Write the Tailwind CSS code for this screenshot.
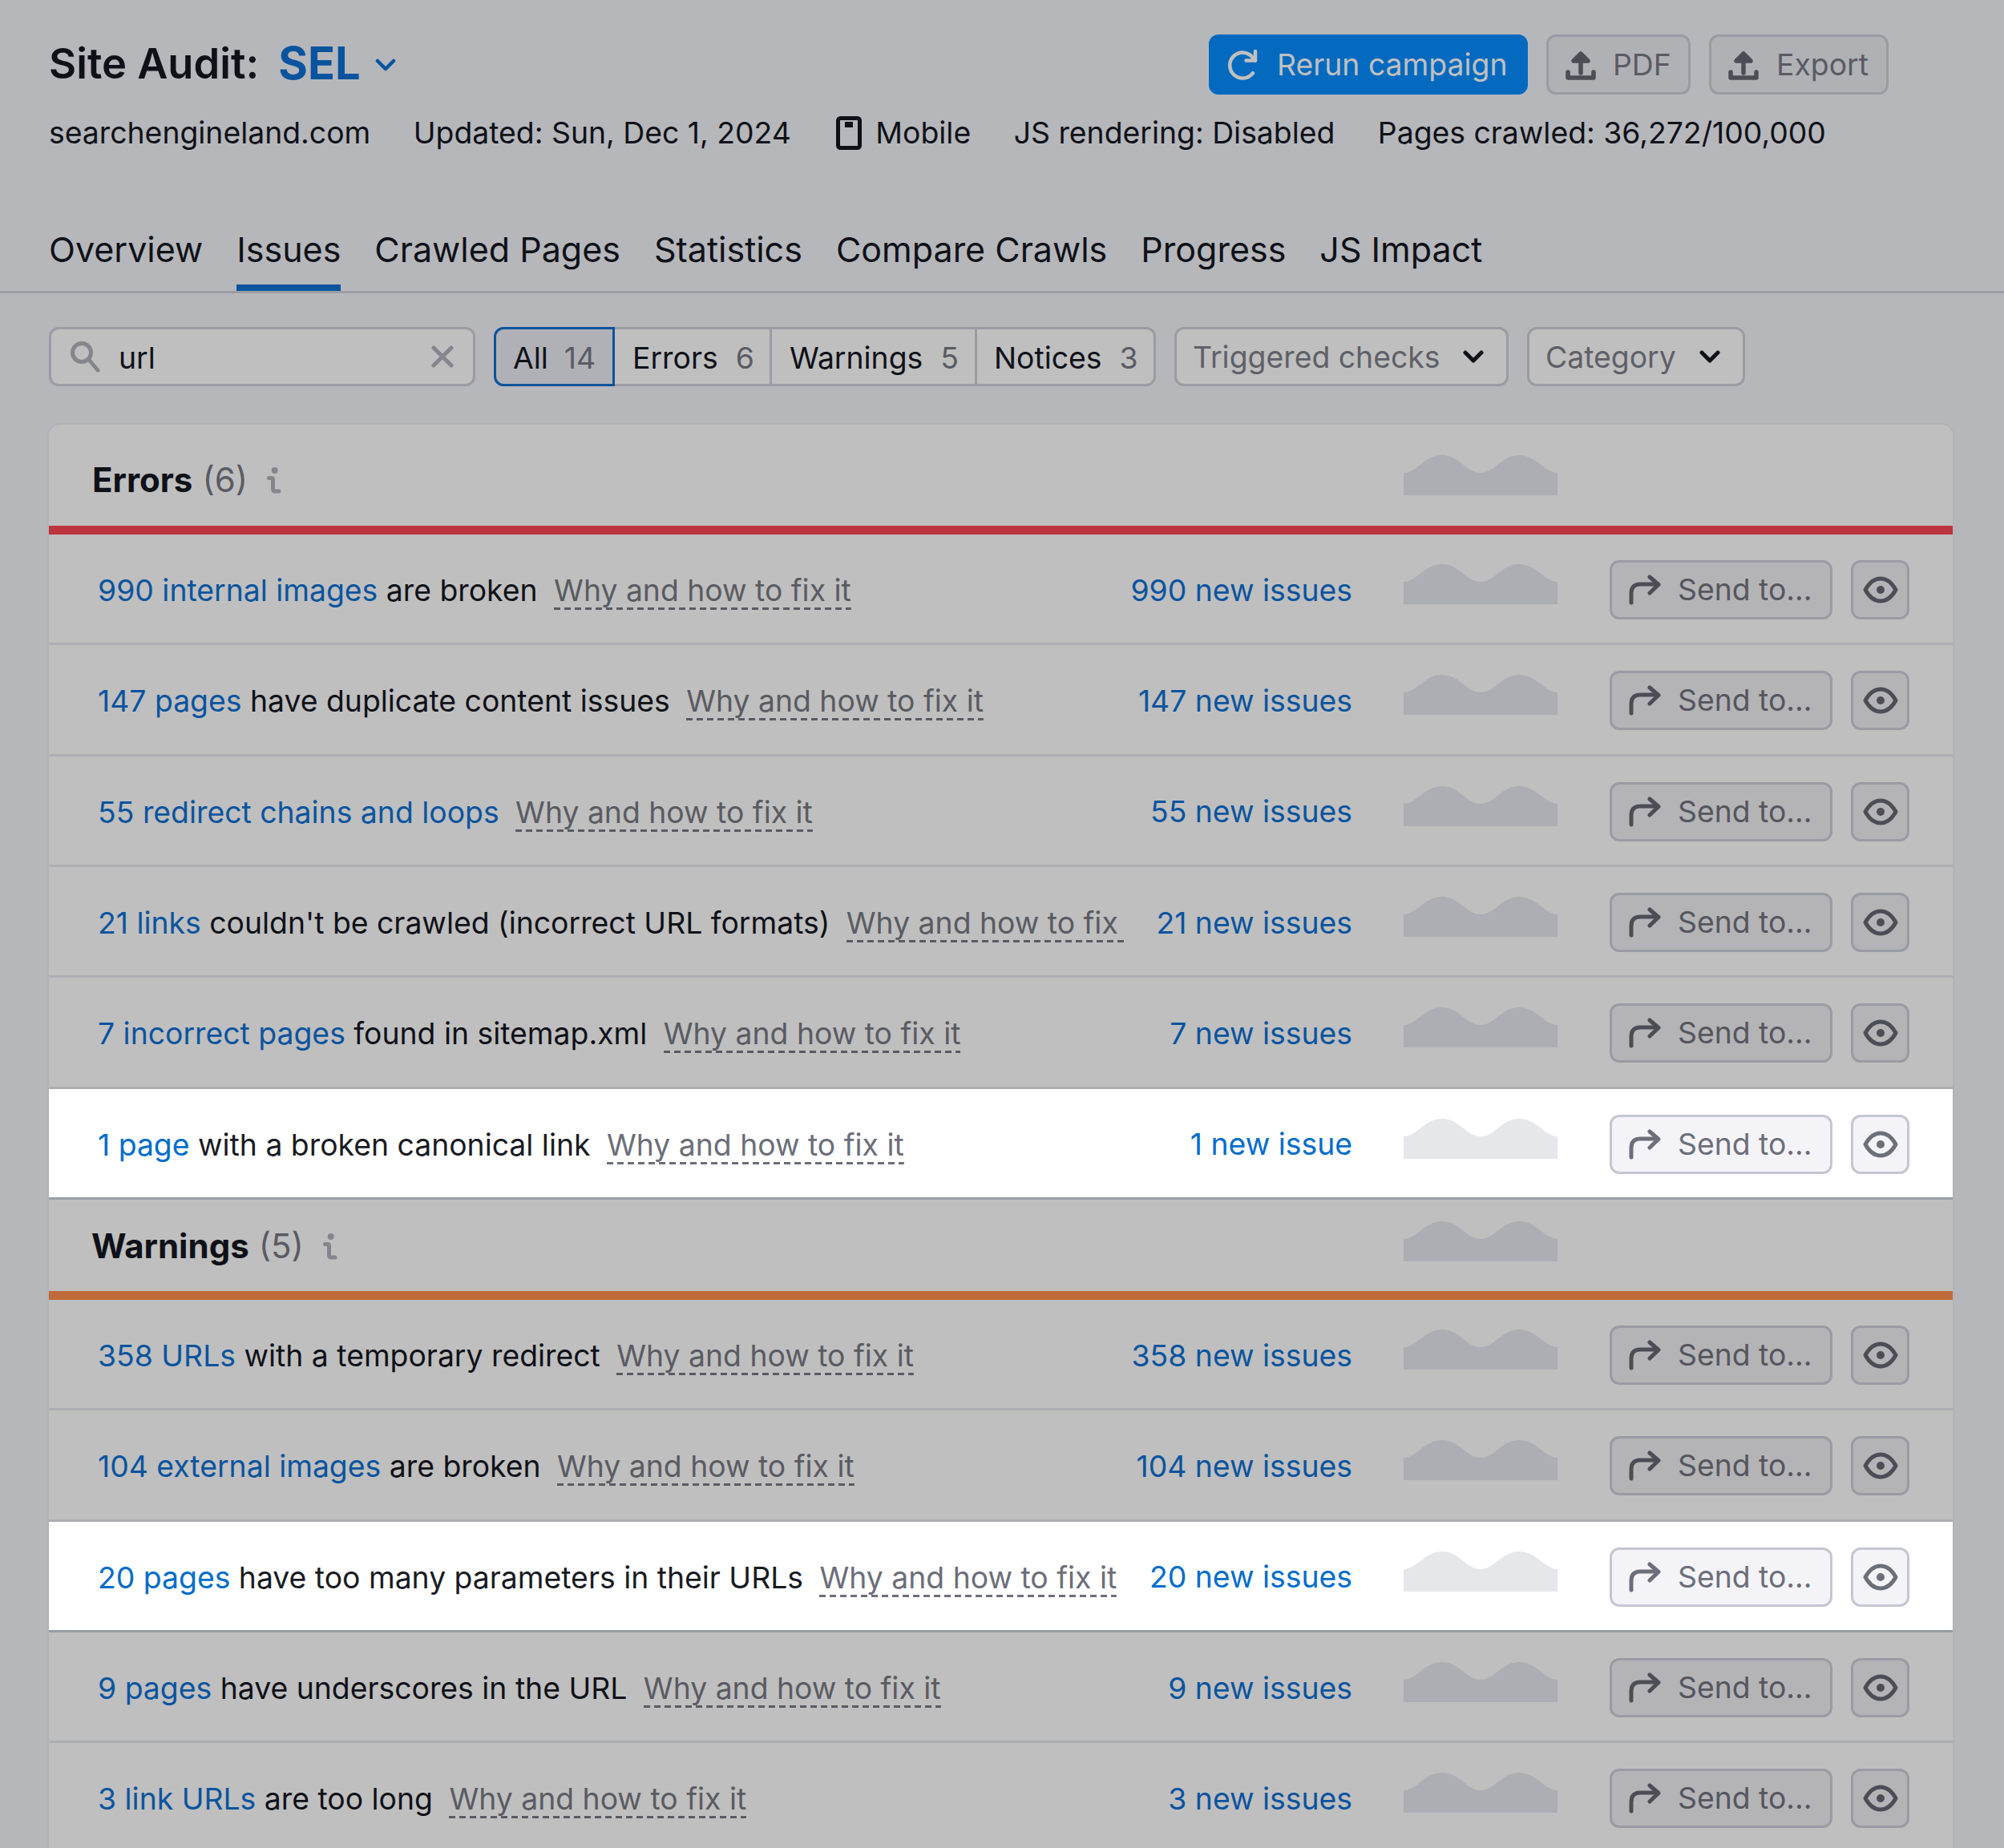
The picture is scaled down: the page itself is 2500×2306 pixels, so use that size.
<!DOCTYPE html>
<html lang="en">
<head>
<meta charset="utf-8">
<title>Site Audit</title>
<script src="https://cdn.jsdelivr.net/npm/@tailwindcss/browser@4"></script>
</head>
<body class="bg-[#b6b7bb] font-['Inter',sans-serif] text-[#0f1118] text-[37.33px] leading-[44px] overflow-hidden">
<div class="w-[2500px] h-[2306px] overflow-hidden">

<header class="px-[61px] h-[366px] border-b-[3px] border-[#9c9da4] flex flex-col">
  <div class="flex items-center h-[75px] mt-[43px]">
    <h1 class="mb-[3px] text-[52.500px] leading-[56px] font-semibold">Site Audit:</h1>
    <span class="mb-[3px] ml-[24px] text-[56px] leading-[56px] font-bold text-[#0a549e]">SEL</span>
    <svg class="ml-[18px] mt-[1px]" width="26" height="16" viewBox="0 0 26 16" fill="none" stroke="#0a549e" stroke-width="4.500" stroke-linecap="round" stroke-linejoin="round"><path d="M3 3l10 10L23 3"/></svg>
    <div class="ml-auto mr-[83px] flex gap-[23px]">
      <button class="h-[75px] w-[398px] rounded-[12px] bg-[#046abf] text-[#c0c0c0] flex items-center pl-[24px]">
        <svg width="40" height="40" viewBox="0 0 40 40" fill="none" stroke="#c0c0c0" stroke-width="4.500" stroke-linecap="round" stroke-linejoin="round"><path d="M31 30.200A16 16 0 1 1 31 11L34 14.500"/><path d="M34 3V14.500H22.500"/></svg>
        <span class="ml-[21px]">Rerun campaign</span>
      </button>
      <button class="h-[75px] w-[180px] rounded-[12px] bg-[#b0b1b5] border-[3px] border-[#9b9ca3] text-[#5a5b63] flex items-center pl-[20px]">
        <svg width="40" height="38" viewBox="0 0 40 38" fill="none" stroke="#4c4d55" stroke-width="5.500" stroke-linecap="round" stroke-linejoin="round"><path d="M20 5L11 14H29Z" fill="#4c4d55"/><path d="M20 10V29"/><path d="M4 28V35H36V28"/></svg>
        <span class="ml-[20px]">PDF</span>
      </button>
      <button class="h-[75px] w-[224px] rounded-[12px] bg-[#b0b1b5] border-[3px] border-[#9b9ca3] text-[#5a5b63] flex items-center pl-[20px]">
        <svg width="40" height="38" viewBox="0 0 40 38" fill="none" stroke="#4c4d55" stroke-width="5.500" stroke-linecap="round" stroke-linejoin="round"><path d="M20 5L11 14H29Z" fill="#4c4d55"/><path d="M20 10V29"/><path d="M4 28V35H36V28"/></svg>
        <span class="ml-[21px]">Export</span>
      </button>
    </div>
  </div>
  <div class="flex items-center h-[44px] mt-[26px] gap-[53.500px]">
    <span>searchengineland.com</span>
    <span>Updated: Sun, Dec 1, 2024</span>
    <span class="flex items-center">
      <svg class="ml-[3px]" width="32" height="42" viewBox="0 0 32 42" fill="none"><rect x="2.500" y="2.500" width="27" height="37" rx="3" stroke="#0f1118" stroke-width="5"/><rect x="11" y="7" width="10" height="7" fill="#0f1118"/></svg>
      <span class="ml-[17px]">Mobile</span>
    </span>
    <span>JS rendering: Disabled</span>
    <span>Pages crawled: 36,272/100,000</span>
  </div>
  <nav class="flex gap-[42px] mt-auto text-[43px] leading-[52px]">
    <a class="h-[88px] pt-[10px]">Overview</a>
    <a class="h-[88px] pt-[10px] border-b-[8px] border-[#0a549e] -mb-[2px]">Issues</a>
    <a class="h-[88px] pt-[10px]">Crawled Pages</a>
    <a class="h-[88px] pt-[10px]">Statistics</a>
    <a class="h-[88px] pt-[10px]">Compare Crawls</a>
    <a class="h-[88px] pt-[10px]">Progress</a>
    <a class="h-[88px] pt-[10px]">JS Impact</a>
  </nav>
</header>

<div class="flex items-center px-[61px] mt-[42px] h-[74px]">
  <div class="w-[532px] h-[74px] rounded-[12px] border-[3px] border-[#9b9ca3] bg-[#bfbfbf] flex items-center pl-[23px] pr-[24px]">
    <svg width="38" height="40" viewBox="0 0 38 40" fill="none" stroke="#85868d" stroke-width="5" stroke-linecap="round"><circle cx="15" cy="15" r="11.500"/><path d="M24 24l11 13"/></svg>
    <span class="ml-[23px] pt-[4px]">url</span>
    <svg class="ml-auto" width="28" height="28" viewBox="0 0 28 28" fill="none" stroke="#85868d" stroke-width="5" stroke-linecap="round"><path d="M3 3l22 22M25 3L3 25"/></svg>
  </div>
  <div class="ml-[23px] flex h-[74px]">
    <div class="w-[151px] pt-[4px] rounded-l-[12px] border-[3px] border-[#0a549e] bg-[#b0b1b7] flex items-center pl-[21px]"><span>All</span><span class="ml-[20px] text-[#5a5b63]">14</span></div>
    <div class="w-[196px] pt-[4px] border-y-[3px] border-r-[3px] border-[#9b9ca3] bg-[#bfbfbf] flex items-center pl-[22px]"><span>Errors</span><span class="ml-[22px] text-[#5a5b63]">6</span></div>
    <div class="w-[256px] pt-[4px] border-y-[3px] border-r-[3px] border-[#9b9ca3] bg-[#bfbfbf] flex items-center pl-[22px]"><span>Warnings</span><span class="ml-[22px] text-[#5a5b63]">5</span></div>
    <div class="w-[223px] pt-[4px] rounded-r-[12px] border-y-[3px] border-r-[3px] border-[#9b9ca3] bg-[#bfbfbf] flex items-center pl-[21px]"><span>Notices</span><span class="ml-[22px] text-[#5a5b63]">3</span></div>
  </div>
  <div class="ml-[23px] w-[417px] h-[74px] rounded-[12px] border-[3px] border-[#9b9ca3] bg-[#bfbfbf] flex items-center pl-[20px] text-[#5f6068]">
    <span class="pt-[1px]">Triggered checks</span>
    <svg class="ml-auto mr-[28px]" width="26" height="18" viewBox="0 0 26 18" fill="none" stroke="#0f1118" stroke-width="5" stroke-linecap="round" stroke-linejoin="round"><path d="M3 4l10 10L23 4"/></svg>
  </div>
  <div class="ml-[23px] w-[272px] h-[74px] rounded-[12px] border-[3px] border-[#9b9ca3] bg-[#bfbfbf] flex items-center pl-[20px] text-[#5f6068]">
    <span class="pt-[1px]">Category</span>
    <svg class="ml-auto mr-[28px]" width="26" height="18" viewBox="0 0 26 18" fill="none" stroke="#0f1118" stroke-width="5" stroke-linecap="round" stroke-linejoin="round"><path d="M3 4l10 10L23 4"/></svg>
  </div>
</div>

<main class="ml-[59px] mt-[46px] w-[2379px] bg-[#bfbfbf] rounded-t-[16px] border-x-2 border-t-2 border-[#b2b3b7]">

  <section class="h-[126px] flex items-center">
    <div class="ml-[54px] mt-[12px] flex items-center">
      <h2 class="text-[42px] leading-[50px] font-bold">Errors</h2>
      <span class="ml-[12px] text-[42px] leading-[50px] text-[#5a5b63]">(6)</span>
      <svg class="ml-[24px]" width="18" height="36" viewBox="0 0 18 36" fill="none" stroke="#85868d" stroke-width="5" stroke-linecap="round" stroke-linejoin="round"><circle cx="9.700" cy="6" r="4" fill="#85868d" stroke="none"/><path d="M2.500 15.500H6Q7.500 15.500 7.500 17V29Q7.500 32 10 32H15"/></svg>
    </div>
    <svg class="ml-auto mr-[493px] shrink-0" width="192" height="50" viewBox="0 0 192 50" fill="#adaeb4"><path d="M0 22C16 22 26 0 48 0S78 22 96 22 122 0 144 0 176 22 192 22V50H0z"/></svg>
  </section>
  <div class="h-[11px] bg-[#bd3540]"></div>

  <div class="h-[138.33px] pt-[3px] flex items-center border-b-[3px] border-[#adaeb3]">
    <div class="ml-[61px] flex-1 min-w-0 pt-[10px] pb-[6px] whitespace-nowrap overflow-hidden"><a class="text-[#0a549e]">990 internal images</a> are broken <span class="inline-block leading-[42px] ml-[10px] pb-[3px] text-[#5a5b62] bg-[repeating-linear-gradient(90deg,#5a5b62_0,#5a5b62_8px,transparent_8px,transparent_13px)] bg-bottom bg-no-repeat bg-[length:100%_3px]">Why and how to fix it</span></div>
    <span class="ml-[20px] pt-[1px] text-[#0a549e] whitespace-nowrap">990 new issues</span>
    <svg class="ml-[64px] mb-[14px] shrink-0" width="192" height="50" viewBox="0 0 192 50" fill="#adaeb4"><path d="M0 22C16 22 26 0 48 0S78 22 96 22 122 0 144 0 176 22 192 22V50H0z"/></svg>
    <button class="ml-[65px] w-[278px] h-[74px] rounded-[12px] bg-[#b4b4b7] border-[3px] border-[#9a9ba3] text-[#55565e] flex items-center pl-[21px] shrink-0"><svg width="40" height="38" viewBox="0 0 40 38" fill="none" stroke="#4c4d55" stroke-width="5" stroke-linecap="round" stroke-linejoin="round"><path d="M3 35V23C3 15 8 12 14 12H36"/><path d="M26 3l11 9.500-11 10.500"/></svg><span class="ml-[21px]">Send to...</span></button>
    <button class="ml-[23px] mr-[54px] w-[73px] h-[74px] rounded-[12px] bg-[#b4b4b7] border-[3px] border-[#9a9ba3] flex items-center justify-center shrink-0"><svg width="44" height="34" viewBox="0 0 44 34" fill="none" stroke="#4c4d55" stroke-width="5"><path d="M3 17C8 8 14 3 22 3s14 5 19 14c-5 9-11 14-19 14S8 26 3 17z" stroke-linejoin="round"/><circle cx="22" cy="17" r="5" fill="#4c4d55" stroke="none"/></svg></button>
  </div>

  <div class="h-[138.33px] pt-[3px] flex items-center border-b-[3px] border-[#adaeb3]">
    <div class="ml-[61px] flex-1 min-w-0 pt-[10px] pb-[6px] whitespace-nowrap overflow-hidden"><a class="text-[#0a549e]">147 pages</a> have duplicate content issues <span class="inline-block leading-[42px] ml-[10px] pb-[3px] text-[#5a5b62] bg-[repeating-linear-gradient(90deg,#5a5b62_0,#5a5b62_8px,transparent_8px,transparent_13px)] bg-bottom bg-no-repeat bg-[length:100%_3px]">Why and how to fix it</span></div>
    <span class="ml-[20px] pt-[1px] text-[#0a549e] whitespace-nowrap">147 new issues</span>
    <svg class="ml-[64px] mb-[14px] shrink-0" width="192" height="50" viewBox="0 0 192 50" fill="#adaeb4"><path d="M0 22C16 22 26 0 48 0S78 22 96 22 122 0 144 0 176 22 192 22V50H0z"/></svg>
    <button class="ml-[65px] w-[278px] h-[74px] rounded-[12px] bg-[#b4b4b7] border-[3px] border-[#9a9ba3] text-[#55565e] flex items-center pl-[21px] shrink-0"><svg width="40" height="38" viewBox="0 0 40 38" fill="none" stroke="#4c4d55" stroke-width="5" stroke-linecap="round" stroke-linejoin="round"><path d="M3 35V23C3 15 8 12 14 12H36"/><path d="M26 3l11 9.500-11 10.500"/></svg><span class="ml-[21px]">Send to...</span></button>
    <button class="ml-[23px] mr-[54px] w-[73px] h-[74px] rounded-[12px] bg-[#b4b4b7] border-[3px] border-[#9a9ba3] flex items-center justify-center shrink-0"><svg width="44" height="34" viewBox="0 0 44 34" fill="none" stroke="#4c4d55" stroke-width="5"><path d="M3 17C8 8 14 3 22 3s14 5 19 14c-5 9-11 14-19 14S8 26 3 17z" stroke-linejoin="round"/><circle cx="22" cy="17" r="5" fill="#4c4d55" stroke="none"/></svg></button>
  </div>

  <div class="h-[138.33px] pt-[3px] flex items-center border-b-[3px] border-[#adaeb3]">
    <div class="ml-[61px] flex-1 min-w-0 pt-[10px] pb-[6px] whitespace-nowrap overflow-hidden"><a class="text-[#0a549e]">55 redirect chains and loops</a> <span class="inline-block leading-[42px] ml-[10px] pb-[3px] text-[#5a5b62] bg-[repeating-linear-gradient(90deg,#5a5b62_0,#5a5b62_8px,transparent_8px,transparent_13px)] bg-bottom bg-no-repeat bg-[length:100%_3px]">Why and how to fix it</span></div>
    <span class="ml-[20px] pt-[1px] text-[#0a549e] whitespace-nowrap">55 new issues</span>
    <svg class="ml-[64px] mb-[14px] shrink-0" width="192" height="50" viewBox="0 0 192 50" fill="#adaeb4"><path d="M0 22C16 22 26 0 48 0S78 22 96 22 122 0 144 0 176 22 192 22V50H0z"/></svg>
    <button class="ml-[65px] w-[278px] h-[74px] rounded-[12px] bg-[#b4b4b7] border-[3px] border-[#9a9ba3] text-[#55565e] flex items-center pl-[21px] shrink-0"><svg width="40" height="38" viewBox="0 0 40 38" fill="none" stroke="#4c4d55" stroke-width="5" stroke-linecap="round" stroke-linejoin="round"><path d="M3 35V23C3 15 8 12 14 12H36"/><path d="M26 3l11 9.500-11 10.500"/></svg><span class="ml-[21px]">Send to...</span></button>
    <button class="ml-[23px] mr-[54px] w-[73px] h-[74px] rounded-[12px] bg-[#b4b4b7] border-[3px] border-[#9a9ba3] flex items-center justify-center shrink-0"><svg width="44" height="34" viewBox="0 0 44 34" fill="none" stroke="#4c4d55" stroke-width="5"><path d="M3 17C8 8 14 3 22 3s14 5 19 14c-5 9-11 14-19 14S8 26 3 17z" stroke-linejoin="round"/><circle cx="22" cy="17" r="5" fill="#4c4d55" stroke="none"/></svg></button>
  </div>

  <div class="h-[138.33px] pt-[3px] flex items-center border-b-[3px] border-[#adaeb3]">
    <div class="ml-[61px] flex-1 min-w-0 pt-[10px] pb-[6px] whitespace-nowrap overflow-hidden"><a class="text-[#0a549e]">21 links</a> couldn't be crawled (incorrect URL formats) <span class="inline-block leading-[42px] ml-[10px] pb-[3px] text-[#5a5b62] bg-[repeating-linear-gradient(90deg,#5a5b62_0,#5a5b62_8px,transparent_8px,transparent_13px)] bg-bottom bg-no-repeat bg-[length:100%_3px]">Why and how to fix&nbsp;</span></div>
    <span class="ml-[20px] pt-[1px] text-[#0a549e] whitespace-nowrap">21 new issues</span>
    <svg class="ml-[64px] mb-[14px] shrink-0" width="192" height="50" viewBox="0 0 192 50" fill="#adaeb4"><path d="M0 22C16 22 26 0 48 0S78 22 96 22 122 0 144 0 176 22 192 22V50H0z"/></svg>
    <button class="ml-[65px] w-[278px] h-[74px] rounded-[12px] bg-[#b4b4b7] border-[3px] border-[#9a9ba3] text-[#55565e] flex items-center pl-[21px] shrink-0"><svg width="40" height="38" viewBox="0 0 40 38" fill="none" stroke="#4c4d55" stroke-width="5" stroke-linecap="round" stroke-linejoin="round"><path d="M3 35V23C3 15 8 12 14 12H36"/><path d="M26 3l11 9.500-11 10.500"/></svg><span class="ml-[21px]">Send to...</span></button>
    <button class="ml-[23px] mr-[54px] w-[73px] h-[74px] rounded-[12px] bg-[#b4b4b7] border-[3px] border-[#9a9ba3] flex items-center justify-center shrink-0"><svg width="44" height="34" viewBox="0 0 44 34" fill="none" stroke="#4c4d55" stroke-width="5"><path d="M3 17C8 8 14 3 22 3s14 5 19 14c-5 9-11 14-19 14S8 26 3 17z" stroke-linejoin="round"/><circle cx="22" cy="17" r="5" fill="#4c4d55" stroke="none"/></svg></button>
  </div>

  <div class="h-[138.33px] pt-[3px] flex items-center border-b-[3px] border-[#adaeb3]">
    <div class="ml-[61px] flex-1 min-w-0 pt-[10px] pb-[6px] whitespace-nowrap overflow-hidden"><a class="text-[#0a549e]">7 incorrect pages</a> found in sitemap.xml <span class="inline-block leading-[42px] ml-[10px] pb-[3px] text-[#5a5b62] bg-[repeating-linear-gradient(90deg,#5a5b62_0,#5a5b62_8px,transparent_8px,transparent_13px)] bg-bottom bg-no-repeat bg-[length:100%_3px]">Why and how to fix it</span></div>
    <span class="ml-[20px] pt-[1px] text-[#0a549e] whitespace-nowrap">7 new issues</span>
    <svg class="ml-[64px] mb-[14px] shrink-0" width="192" height="50" viewBox="0 0 192 50" fill="#adaeb4"><path d="M0 22C16 22 26 0 48 0S78 22 96 22 122 0 144 0 176 22 192 22V50H0z"/></svg>
    <button class="ml-[65px] w-[278px] h-[74px] rounded-[12px] bg-[#b4b4b7] border-[3px] border-[#9a9ba3] text-[#55565e] flex items-center pl-[21px] shrink-0"><svg width="40" height="38" viewBox="0 0 40 38" fill="none" stroke="#4c4d55" stroke-width="5" stroke-linecap="round" stroke-linejoin="round"><path d="M3 35V23C3 15 8 12 14 12H36"/><path d="M26 3l11 9.500-11 10.500"/></svg><span class="ml-[21px]">Send to...</span></button>
    <button class="ml-[23px] mr-[54px] w-[73px] h-[74px] rounded-[12px] bg-[#b4b4b7] border-[3px] border-[#9a9ba3] flex items-center justify-center shrink-0"><svg width="44" height="34" viewBox="0 0 44 34" fill="none" stroke="#4c4d55" stroke-width="5"><path d="M3 17C8 8 14 3 22 3s14 5 19 14c-5 9-11 14-19 14S8 26 3 17z" stroke-linejoin="round"/><circle cx="22" cy="17" r="5" fill="#4c4d55" stroke="none"/></svg></button>
  </div>

  <div class="h-[138.33px] pt-[3px] flex items-center border-b-[3px] border-[#9a9ca5] bg-white text-[#191b23]">
    <div class="ml-[61px] flex-1 min-w-0 pt-[10px] pb-[6px] whitespace-nowrap overflow-hidden"><a class="text-[#006dca]">1 page</a> with a broken canonical link <span class="inline-block leading-[42px] ml-[10px] pb-[3px] text-[#6c6e79] bg-[repeating-linear-gradient(90deg,#6c6e79_0,#6c6e79_8px,transparent_8px,transparent_13px)] bg-bottom bg-no-repeat bg-[length:100%_3px]">Why and how to fix it</span></div>
    <span class="ml-[20px] pt-[1px] text-[#006dca] whitespace-nowrap">1 new issue</span>
    <svg class="ml-[64px] mb-[14px] shrink-0" width="192" height="50" viewBox="0 0 192 50" fill="#e6e7eb"><path d="M0 22C16 22 26 0 48 0S78 22 96 22 122 0 144 0 176 22 192 22V50H0z"/></svg>
    <button class="ml-[65px] w-[278px] h-[74px] rounded-[12px] bg-[#f4f4f8] border-[3px] border-[#c4c7cf] text-[#6c6e79] flex items-center pl-[21px] shrink-0"><svg width="40" height="38" viewBox="0 0 40 38" fill="none" stroke="#6c6e79" stroke-width="5" stroke-linecap="round" stroke-linejoin="round"><path d="M3 35V23C3 15 8 12 14 12H36"/><path d="M26 3l11 9.500-11 10.500"/></svg><span class="ml-[21px]">Send to...</span></button>
    <button class="ml-[23px] mr-[54px] w-[73px] h-[74px] rounded-[12px] bg-[#f4f4f8] border-[3px] border-[#c4c7cf] flex items-center justify-center shrink-0"><svg width="44" height="34" viewBox="0 0 44 34" fill="none" stroke="#6c6e79" stroke-width="5"><path d="M3 17C8 8 14 3 22 3s14 5 19 14c-5 9-11 14-19 14S8 26 3 17z" stroke-linejoin="round"/><circle cx="22" cy="17" r="5" fill="#6c6e79" stroke="none"/></svg></button>
  </div>

  <section class="h-[114px] flex items-center">
    <div class="ml-[53px] mt-[2px] flex items-center">
      <h2 class="text-[42px] leading-[50px] font-bold">Warnings</h2>
      <span class="ml-[12px] text-[42px] leading-[50px] text-[#5a5b63]">(5)</span>
      <svg class="ml-[24px]" width="18" height="36" viewBox="0 0 18 36" fill="none" stroke="#85868d" stroke-width="5" stroke-linecap="round" stroke-linejoin="round"><circle cx="9.700" cy="6" r="4" fill="#85868d" stroke="none"/><path d="M2.500 15.500H6Q7.500 15.500 7.500 17V29Q7.500 32 10 32H15"/></svg>
    </div>
    <svg class="ml-auto mr-[493px] mb-[10px] shrink-0" width="192" height="50" viewBox="0 0 192 50" fill="#adaeb4"><path d="M0 22C16 22 26 0 48 0S78 22 96 22 122 0 144 0 176 22 192 22V50H0z"/></svg>
  </section>
  <div class="h-[11px] bg-[#bf6a3a]"></div>

  <div class="h-[138.33px] pt-[3px] flex items-center border-b-[3px] border-[#adaeb3]">
    <div class="ml-[61px] flex-1 min-w-0 pt-[10px] pb-[6px] whitespace-nowrap overflow-hidden"><a class="text-[#0a549e]">358 URLs</a> with a temporary redirect <span class="inline-block leading-[42px] ml-[10px] pb-[3px] text-[#5a5b62] bg-[repeating-linear-gradient(90deg,#5a5b62_0,#5a5b62_8px,transparent_8px,transparent_13px)] bg-bottom bg-no-repeat bg-[length:100%_3px]">Why and how to fix it</span></div>
    <span class="ml-[20px] pt-[1px] text-[#0a549e] whitespace-nowrap">358 new issues</span>
    <svg class="ml-[64px] mb-[14px] shrink-0" width="192" height="50" viewBox="0 0 192 50" fill="#adaeb4"><path d="M0 22C16 22 26 0 48 0S78 22 96 22 122 0 144 0 176 22 192 22V50H0z"/></svg>
    <button class="ml-[65px] w-[278px] h-[74px] rounded-[12px] bg-[#b4b4b7] border-[3px] border-[#9a9ba3] text-[#55565e] flex items-center pl-[21px] shrink-0"><svg width="40" height="38" viewBox="0 0 40 38" fill="none" stroke="#4c4d55" stroke-width="5" stroke-linecap="round" stroke-linejoin="round"><path d="M3 35V23C3 15 8 12 14 12H36"/><path d="M26 3l11 9.500-11 10.500"/></svg><span class="ml-[21px]">Send to...</span></button>
    <button class="ml-[23px] mr-[54px] w-[73px] h-[74px] rounded-[12px] bg-[#b4b4b7] border-[3px] border-[#9a9ba3] flex items-center justify-center shrink-0"><svg width="44" height="34" viewBox="0 0 44 34" fill="none" stroke="#4c4d55" stroke-width="5"><path d="M3 17C8 8 14 3 22 3s14 5 19 14c-5 9-11 14-19 14S8 26 3 17z" stroke-linejoin="round"/><circle cx="22" cy="17" r="5" fill="#4c4d55" stroke="none"/></svg></button>
  </div>

  <div class="h-[138.33px] pt-[3px] flex items-center border-b-[3px] border-[#adaeb3]">
    <div class="ml-[61px] flex-1 min-w-0 pt-[10px] pb-[6px] whitespace-nowrap overflow-hidden"><a class="text-[#0a549e]">104 external images</a> are broken <span class="inline-block leading-[42px] ml-[10px] pb-[3px] text-[#5a5b62] bg-[repeating-linear-gradient(90deg,#5a5b62_0,#5a5b62_8px,transparent_8px,transparent_13px)] bg-bottom bg-no-repeat bg-[length:100%_3px]">Why and how to fix it</span></div>
    <span class="ml-[20px] pt-[1px] text-[#0a549e] whitespace-nowrap">104 new issues</span>
    <svg class="ml-[64px] mb-[14px] shrink-0" width="192" height="50" viewBox="0 0 192 50" fill="#adaeb4"><path d="M0 22C16 22 26 0 48 0S78 22 96 22 122 0 144 0 176 22 192 22V50H0z"/></svg>
    <button class="ml-[65px] w-[278px] h-[74px] rounded-[12px] bg-[#b4b4b7] border-[3px] border-[#9a9ba3] text-[#55565e] flex items-center pl-[21px] shrink-0"><svg width="40" height="38" viewBox="0 0 40 38" fill="none" stroke="#4c4d55" stroke-width="5" stroke-linecap="round" stroke-linejoin="round"><path d="M3 35V23C3 15 8 12 14 12H36"/><path d="M26 3l11 9.500-11 10.500"/></svg><span class="ml-[21px]">Send to...</span></button>
    <button class="ml-[23px] mr-[54px] w-[73px] h-[74px] rounded-[12px] bg-[#b4b4b7] border-[3px] border-[#9a9ba3] flex items-center justify-center shrink-0"><svg width="44" height="34" viewBox="0 0 44 34" fill="none" stroke="#4c4d55" stroke-width="5"><path d="M3 17C8 8 14 3 22 3s14 5 19 14c-5 9-11 14-19 14S8 26 3 17z" stroke-linejoin="round"/><circle cx="22" cy="17" r="5" fill="#4c4d55" stroke="none"/></svg></button>
  </div>

  <div class="h-[138.33px] pt-[3px] flex items-center border-b-[3px] border-[#9a9ca5] bg-white text-[#191b23]">
    <div class="ml-[61px] flex-1 min-w-0 pt-[10px] pb-[6px] whitespace-nowrap overflow-hidden"><a class="text-[#006dca]">20 pages</a> have too many parameters in their URLs <span class="inline-block leading-[42px] ml-[10px] pb-[3px] text-[#6c6e79] bg-[repeating-linear-gradient(90deg,#6c6e79_0,#6c6e79_8px,transparent_8px,transparent_13px)] bg-bottom bg-no-repeat bg-[length:100%_3px]">Why and how to fix it</span></div>
    <span class="ml-[20px] pt-[1px] text-[#006dca] whitespace-nowrap">20 new issues</span>
    <svg class="ml-[64px] mb-[14px] shrink-0" width="192" height="50" viewBox="0 0 192 50" fill="#e6e7eb"><path d="M0 22C16 22 26 0 48 0S78 22 96 22 122 0 144 0 176 22 192 22V50H0z"/></svg>
    <button class="ml-[65px] w-[278px] h-[74px] rounded-[12px] bg-[#f4f4f8] border-[3px] border-[#c4c7cf] text-[#6c6e79] flex items-center pl-[21px] shrink-0"><svg width="40" height="38" viewBox="0 0 40 38" fill="none" stroke="#6c6e79" stroke-width="5" stroke-linecap="round" stroke-linejoin="round"><path d="M3 35V23C3 15 8 12 14 12H36"/><path d="M26 3l11 9.500-11 10.500"/></svg><span class="ml-[21px]">Send to...</span></button>
    <button class="ml-[23px] mr-[54px] w-[73px] h-[74px] rounded-[12px] bg-[#f4f4f8] border-[3px] border-[#c4c7cf] flex items-center justify-center shrink-0"><svg width="44" height="34" viewBox="0 0 44 34" fill="none" stroke="#6c6e79" stroke-width="5"><path d="M3 17C8 8 14 3 22 3s14 5 19 14c-5 9-11 14-19 14S8 26 3 17z" stroke-linejoin="round"/><circle cx="22" cy="17" r="5" fill="#6c6e79" stroke="none"/></svg></button>
  </div>

  <div class="h-[138.33px] pt-[3px] flex items-center border-b-[3px] border-[#adaeb3]">
    <div class="ml-[61px] flex-1 min-w-0 pt-[10px] pb-[6px] whitespace-nowrap overflow-hidden"><a class="text-[#0a549e]">9 pages</a> have underscores in the URL <span class="inline-block leading-[42px] ml-[10px] pb-[3px] text-[#5a5b62] bg-[repeating-linear-gradient(90deg,#5a5b62_0,#5a5b62_8px,transparent_8px,transparent_13px)] bg-bottom bg-no-repeat bg-[length:100%_3px]">Why and how to fix it</span></div>
    <span class="ml-[20px] pt-[1px] text-[#0a549e] whitespace-nowrap">9 new issues</span>
    <svg class="ml-[64px] mb-[14px] shrink-0" width="192" height="50" viewBox="0 0 192 50" fill="#adaeb4"><path d="M0 22C16 22 26 0 48 0S78 22 96 22 122 0 144 0 176 22 192 22V50H0z"/></svg>
    <button class="ml-[65px] w-[278px] h-[74px] rounded-[12px] bg-[#b4b4b7] border-[3px] border-[#9a9ba3] text-[#55565e] flex items-center pl-[21px] shrink-0"><svg width="40" height="38" viewBox="0 0 40 38" fill="none" stroke="#4c4d55" stroke-width="5" stroke-linecap="round" stroke-linejoin="round"><path d="M3 35V23C3 15 8 12 14 12H36"/><path d="M26 3l11 9.500-11 10.500"/></svg><span class="ml-[21px]">Send to...</span></button>
    <button class="ml-[23px] mr-[54px] w-[73px] h-[74px] rounded-[12px] bg-[#b4b4b7] border-[3px] border-[#9a9ba3] flex items-center justify-center shrink-0"><svg width="44" height="34" viewBox="0 0 44 34" fill="none" stroke="#4c4d55" stroke-width="5"><path d="M3 17C8 8 14 3 22 3s14 5 19 14c-5 9-11 14-19 14S8 26 3 17z" stroke-linejoin="round"/><circle cx="22" cy="17" r="5" fill="#4c4d55" stroke="none"/></svg></button>
  </div>

  <div class="h-[138.33px] pt-[3px] flex items-center border-b-[3px] border-[#adaeb3]">
    <div class="ml-[61px] flex-1 min-w-0 pt-[10px] pb-[6px] whitespace-nowrap overflow-hidden"><a class="text-[#0a549e]">3 link URLs</a> are too long <span class="inline-block leading-[42px] ml-[10px] pb-[3px] text-[#5a5b62] bg-[repeating-linear-gradient(90deg,#5a5b62_0,#5a5b62_8px,transparent_8px,transparent_13px)] bg-bottom bg-no-repeat bg-[length:100%_3px]">Why and how to fix it</span></div>
    <span class="ml-[20px] pt-[1px] text-[#0a549e] whitespace-nowrap">3 new issues</span>
    <svg class="ml-[64px] mb-[14px] shrink-0" width="192" height="50" viewBox="0 0 192 50" fill="#adaeb4"><path d="M0 22C16 22 26 0 48 0S78 22 96 22 122 0 144 0 176 22 192 22V50H0z"/></svg>
    <button class="ml-[65px] w-[278px] h-[74px] rounded-[12px] bg-[#b4b4b7] border-[3px] border-[#9a9ba3] text-[#55565e] flex items-center pl-[21px] shrink-0"><svg width="40" height="38" viewBox="0 0 40 38" fill="none" stroke="#4c4d55" stroke-width="5" stroke-linecap="round" stroke-linejoin="round"><path d="M3 35V23C3 15 8 12 14 12H36"/><path d="M26 3l11 9.500-11 10.500"/></svg><span class="ml-[21px]">Send to...</span></button>
    <button class="ml-[23px] mr-[54px] w-[73px] h-[74px] rounded-[12px] bg-[#b4b4b7] border-[3px] border-[#9a9ba3] flex items-center justify-center shrink-0"><svg width="44" height="34" viewBox="0 0 44 34" fill="none" stroke="#4c4d55" stroke-width="5"><path d="M3 17C8 8 14 3 22 3s14 5 19 14c-5 9-11 14-19 14S8 26 3 17z" stroke-linejoin="round"/><circle cx="22" cy="17" r="5" fill="#4c4d55" stroke="none"/></svg></button>
  </div>

</main>
</div>
</body>
</html>
